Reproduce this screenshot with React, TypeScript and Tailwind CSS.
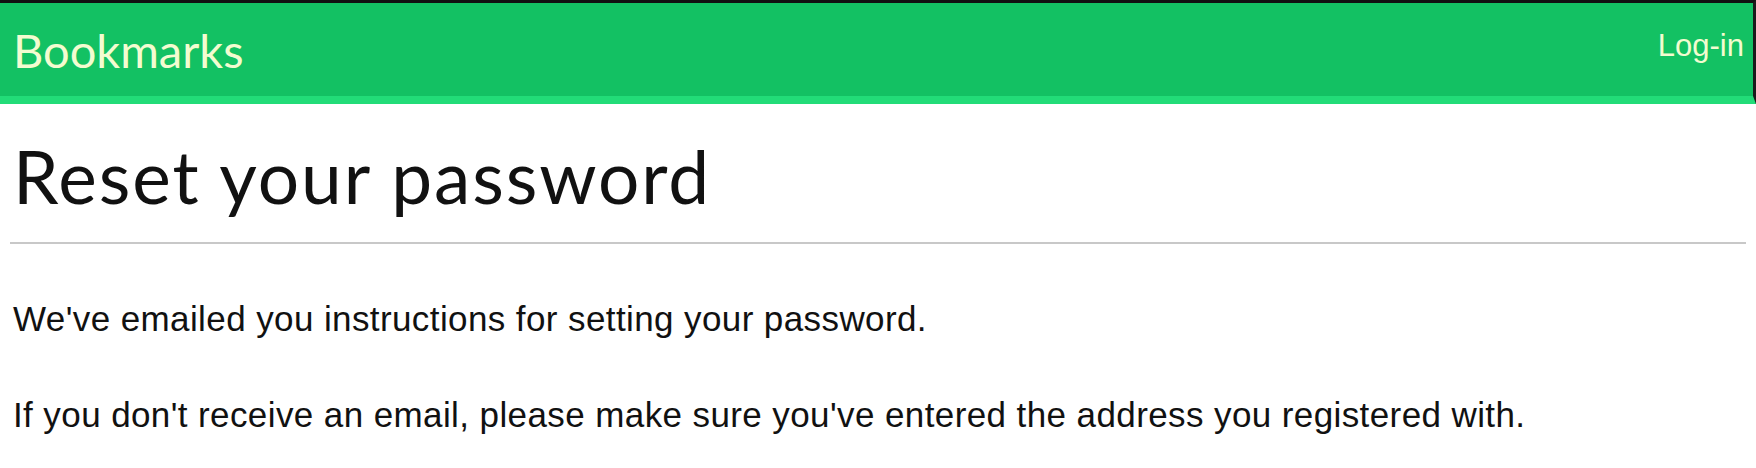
import React from "react";

const App: React.FC = () => {
  return (
    <div className="min-h-[468px] w-full bg-white">
      <header className="flex h-[104px] items-start justify-between border-t-[3px] border-r-[3px] border-b-[8px] border-t-[#111] border-r-[#1a1a1a] border-b-[#22dc78] bg-[#13c163] pl-[13px] pr-[9px]">
        <span className="mt-[19px] font-['Lato',sans-serif] text-[47px] leading-[56px] text-[#f3fcd0]">
          Bookmarks
        </span>
        <span className="mt-[23px] font-['Liberation_Sans',Arial,sans-serif] text-[31px] leading-[40px] text-[#f3fcd0]">
          Log-in
        </span>
      </header>
      <main className="px-[10px]">
        <h1 className="mt-[28px] pl-[3px] font-['Lato',sans-serif] text-[73px] leading-[88px] tracking-[1.9px] text-[#111]">
          Reset your password
        </h1>
        <hr className="mt-[22px] border-t-[2px] border-[#c8c8c8]" />
        <div className="pl-[3px] font-['Liberation_Sans',Arial,sans-serif] text-[35px] leading-[40px] tracking-[0.4px] text-[#111]">
          <p className="mt-[55px]">We've emailed you instructions for setting your password.</p>
          <p className="mt-[56px]">
            If you don't receive an email, please make sure you've entered the address you registered with.
          </p>
        </div>
      </main>
    </div>
  );
};

export default App;
